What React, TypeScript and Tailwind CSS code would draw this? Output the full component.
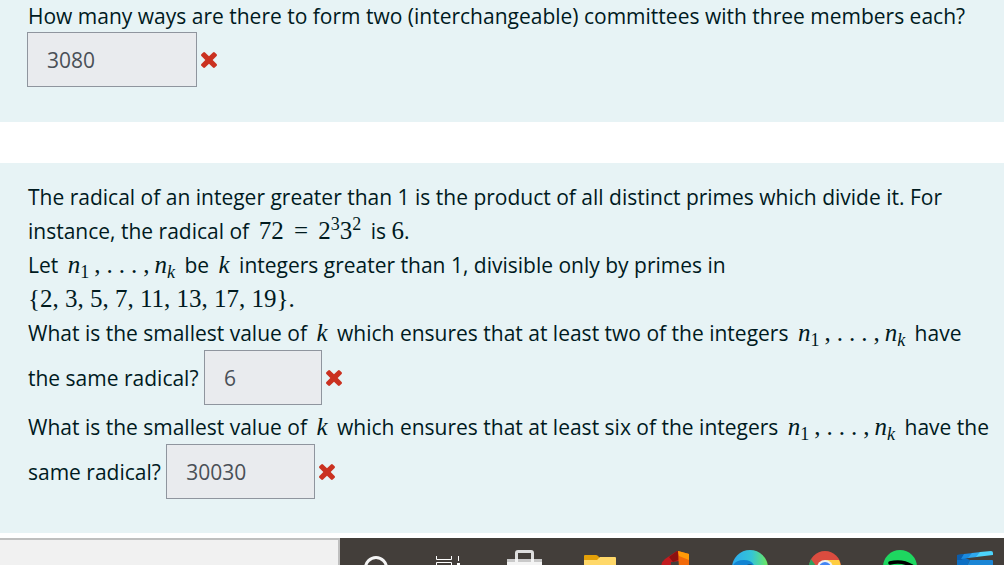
import type { ReactNode } from "react";

function Incorrect() {
  return (
    <svg
      role="img"
      aria-label="Incorrect"
      viewBox="110 366 1188 1188"
      className="ml-1 inline-block size-4 align-baseline fill-[#ca3120]"
    >
      <path d="M1298 1322q0 40-28 68l-136 136q-28 28-68 28t-68-28l-294-294-294 294q-28 28-68 28t-68-28l-136-136q-28-28-28-68t28-68l294-294-294-294q-28-28-28-68t28-68l136-136q28-28 68-28t68 28l294 294 294-294q28-28 68-28t68 28l136 136q28 28 28 68t-28 68l-294 294 294 294q28 28 28 68z" />
    </svg>
  );
}

function Answer({ id, value, className }: { id: string; value: string; className: string }) {
  return (
    <>
      <input
        id={id}
        type="text"
        readOnly
        value={value}
        className={`h-[55px] border border-[#8f959e] bg-[#e9ebee] px-[19px] text-[#495057] ${className}`}
      />
      <Incorrect />
    </>
  );
}

function Maths({ children, className = "mx-1" }: { children: ReactNode; className?: string }) {
  return (
    <span className={`font-['Liberation_Serif',serif] text-[25px] leading-none whitespace-nowrap ${className}`}>
      {children}
    </span>
  );
}

function Sub({ children }: { children: ReactNode }) {
  return <sub className="text-lg leading-none">{children}</sub>;
}

function Sup({ children }: { children: ReactNode }) {
  return <sup className="text-lg leading-none">{children}</sup>;
}

// n1, ..., nk
function Sequence() {
  return (
    <Maths>
      <i>n</i>
      <Sub>1</Sub>
      <span className="mr-[3px] ml-[5px]">,</span>
      <span className="mx-[3px]">.</span>
      <span className="mx-[3px]">.</span>
      <span className="mx-[3px]">.</span>
      <span className="mr-[5px] ml-[3px]">,</span>
      <i>n</i>
      <Sub>
        <i>k</i>
      </Sub>
    </Maths>
  );
}

function K() {
  return (
    <Maths>
      <i>k</i>
    </Maths>
  );
}

const primes = [2, 3, 5, 7, 11, 13, 17, 19];

const apps: { name: string; icon: ReactNode }[] = [
  {
    name: "Cortana",
    icon: <circle cx="36" cy="30" r="10.5" fill="none" stroke="#f4f4f4" strokeWidth="3" />,
  },
  {
    name: "Task View",
    icon: (
      <g fill="none" stroke="#fff">
        <path d="M21.500 18v3.500h15V18M21.500 27v-2.500h15V27" />
        <path d="M43.500 18v5" />
        <path d="M42 26.500h3" strokeWidth="3" />
      </g>
    ),
  },
  {
    name: "Microsoft Store",
    icon: (
      <>
        <path d="M26.500 22v-7q0-1.500 1.500-1.500h13q1.500 0 1.500 1.500v7" fill="none" stroke="#dedede" strokeWidth="3" />
        <path d="M17 21h35v10H17z" fill="#f4f4f4" />
        <path d="M17 21h8v3h-8zM28 21h13v3H28zM44 21h8v3h-8z" fill="#c9c9c9" />
      </>
    ),
  },
  {
    name: "File Explorer",
    icon: (
      <>
        <path d="M19 18q0-1 1-1h11q1 0 2 1l2 2v8H19z" fill="#e3a008" />
        <path d="M19 22h13l3-3h15q1 0 1 1v10H19z" fill="#ffd869" />
      </>
    ),
  },
  {
    name: "Office",
    icon: (
      <>
        <path d="M21 30q0-6 4-9l12-8 3 1v9l-9 1v6z" fill="#c21b1f" />
        <path d="M29 19l8-6 3 1v7l-7 3z" fill="#8c1010" />
        <path d="M38 13l11 3v14h-10z" fill="#f26a0a" />
        <path d="M38 13l11 3v6l-10-4z" fill="#ff9a08" />
      </>
    ),
  },
  {
    name: "Microsoft Edge",
    icon: (
      <>
        <defs>
          <linearGradient id="edge">
            <stop offset="0" stopColor="#2baaf0" />
            <stop offset="0.55" stopColor="#35c5d5" />
            <stop offset="1" stopColor="#6de85c" />
          </linearGradient>
        </defs>
        <circle cx="35" cy="30" r="18" fill="url(#edge)" />
        <path d="M17 30q2-8 12-8 9 0 11 8z" fill="#1184d3" />
        <path d="M31 30q0-4 4-4 3 0 4 4z" fill="#155b87" />
      </>
    ),
  },
  {
    name: "Google Chrome",
    icon: (
      <>
        <circle cx="35" cy="29" r="16" fill="#db4c3f" />
        <path d="M21 21l8 11H19V26z" fill="#2da160" />
        <path d="M35 22h14q2 4 2 9H35z" fill="#ffcd40" />
        <circle cx="35" cy="30" r="8" fill="#f1f1f1" />
        <circle cx="35" cy="30" r="6" fill="#4285f4" />
      </>
    ),
  },
  {
    name: "Spotify",
    icon: (
      <>
        <circle cx="35" cy="29" r="17" fill="#1ed760" />
        <path d="M25 25q12-3 22 3" fill="none" stroke="#000" strokeWidth="3.500" strokeLinecap="round" />
      </>
    ),
  },
  {
    name: "Video Editor",
    icon: (
      <>
        <path d="M17 17l8-1v4l5 2-4 8h-9z" fill="#0c6fc4" />
        <path d="M17 17l8-1-3 6h-5z" fill="#0b5cab" />
        <path d="M24 16l9-1-4 5-8 1z" fill="#1a8ae0" />
        <path d="M32 15l9-1-4 5-9 1z" fill="#2fa8ee" />
        <path d="M40 14l11-1q2 0 2 2v2l-17 2z" fill="#4cd3fb" />
        <path d="M30 22h22q1 0 1 1v7H26z" fill="#1b86d6" />
      </>
    ),
  },
];

function Taskbar() {
  return (
    <footer className="flex h-[27px] overflow-hidden bg-[#433e3a]">
      <div className="w-[340px] shrink-0 border-t-2 border-r-2 border-[#bfbfbf] bg-[#f1f1f1]" />
      <nav className="flex min-w-0 flex-1 overflow-hidden">
        {apps.map((app) => (
          <button key={app.name} type="button" aria-label={app.name} className="w-[75px] shrink-0">
            <svg viewBox="0 0 75 27" className="block h-[27px] w-[75px]">
              {app.icon}
            </svg>
          </button>
        ))}
      </nav>
    </footer>
  );
}

export default function App() {
  return (
    <div className="overflow-hidden bg-white font-['Open_Sans','Noto_Sans',sans-serif] text-[21px] leading-[34px] text-[#001a1e]">
      <main>
        <section className="bg-[#e7f3f5] pr-2 pb-[35px] pl-7">
          <label htmlFor="committees" className="block leading-8 whitespace-nowrap">
            How many ways are there to form two (interchangeable) committees with three members each?
          </label>
          <div className="-ml-px">
            <Answer id="committees" value="3080" className="w-[170px]" />
          </div>
        </section>

        <section className="mt-[41px] bg-[#e7f3f5] pt-[17px] pb-[34px] pl-7 whitespace-nowrap">
          <p>
            The radical of an integer greater than 1 is the product of all distinct primes which divide it. For
            <br />
            instance, the radical of{" "}
            <Maths>
              72 <span className="mx-1">=</span> 2<Sup>3</Sup>3<Sup>2</Sup>
            </Maths>{" "}
            is <Maths className="mx-0">6</Maths>.
            <br />
            Let <Sequence /> be <K /> integers greater than 1, divisible only by primes in
            <br />
            <Maths className="mx-0">
              {"{"}
              {primes.join(", ")}
              {"}"}.
            </Maths>
          </p>
          <div>
            <label htmlFor="two">
              What is the smallest value of <K /> which ensures that at least two of the integers <Sequence /> have
              <br />
              the same radical?
            </label>{" "}
            <Answer id="two" value="6" className="w-[118px]" />
          </div>
          <div className="mt-[5px]">
            <label htmlFor="six">
              What is the smallest value of <K /> which ensures that at least six of the integers <Sequence /> have the
              <br />
              same radical?
            </label>{" "}
            <Answer id="six" value="30030" className="w-[149px]" />
          </div>
        </section>
      </main>
      <div className="h-[5px]" />
      <Taskbar />
    </div>
  );
}
